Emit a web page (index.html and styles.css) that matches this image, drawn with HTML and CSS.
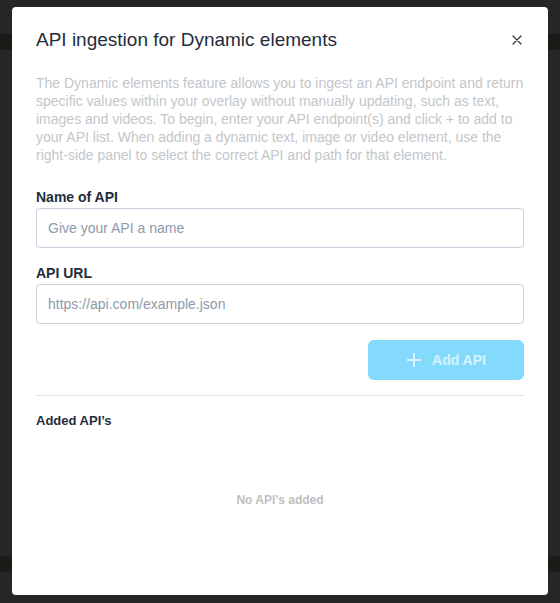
FILE: index.html
```html
<!DOCTYPE html>
<html>
<head>
<meta charset="utf-8">
<link rel="stylesheet" href="styles.css">
</head>
<body>
<div class="backdrop">
  <div class="band band-top"></div>
  <div class="band band-bottom"></div>
  <div class="modal">
    <div class="modal-header">
      <h1 class="title">API ingestion for Dynamic elements</h1>
      <button class="close" aria-label="Close">
        <svg width="10" height="10" viewBox="0 0 10 10"><path d="M1 1L9 9M9 1L1 9" stroke="#2f3b48" stroke-width="1.3" stroke-linecap="round"/></svg>
      </button>
    </div>
    <p class="intro">The Dynamic elements feature allows you to ingest an API endpoint and return specific values within your overlay without manually updating, such as text, images and videos. To begin, enter your API endpoint(s) and click + to add to your API list. When adding a dynamic text, image or video element, use the right-side panel to select the correct API and path for that element.</p>
    <label class="field">
      <span class="label">Name of API</span>
      <input class="input" type="text" placeholder="Give your API a name">
    </label>
    <label class="field">
      <span class="label">API URL</span>
      <input class="input" type="text" placeholder="https://api.com/example.json">
    </label>
    <div class="actions">
      <button class="add-btn">
        <svg width="16" height="16" viewBox="0 0 16 16"><path d="M8 1V15M1 8H15" stroke="#d6f2ff" stroke-width="2"/></svg>
        <span>Add API</span>
      </button>
    </div>
    <hr class="divider">
    <h2 class="subtitle">Added API’s</h2>
    <div class="empty">No API’s added</div>
  </div>
</div>
</body>
</html>
```

FILE: styles.css
```css
html, body {
  margin: 0;
  padding: 0;
}
body {
  background: #262626;
  font-family: "Liberation Sans", Arial, Helvetica, sans-serif;
  width: 560px;
  height: 603px;
  overflow: hidden;
}
.backdrop {
  position: relative;
  width: 560px;
  height: 603px;
  padding-top: 7px;
  box-sizing: border-box;
}
.band {
  position: absolute;
  left: 0;
  right: 0;
  height: 16px;
  background: #1a1a17;
}
.band-top { top: 34px; }
.band-bottom { top: 556px; background: #1b1b18; }
.modal {
  position: relative;
  margin-left: 12px;
  width: 536px;
  height: 588px;
  box-sizing: border-box;
  background: #ffffff;
  border-radius: 4px;
  padding: 21px 24px 0 24px;
  display: flex;
  flex-direction: column;
}
.modal-header {
  display: flex;
  align-items: center;
  justify-content: space-between;
  height: 24px;
}
.title {
  margin: 0;
  font-size: 19px;
  line-height: 24px;
  font-weight: normal;
  color: #1f2d3d;
}
.close {
  border: 0;
  background: none;
  padding: 0;
  width: 10px;
  height: 10px;
  margin-right: 2px;
  display: flex;
}
.intro {
  margin: 22px 0 0 0;
  font-size: 14px;
  line-height: 18px;
  color: #c4c6ca;
}
.field {
  display: flex;
  flex-direction: column;
  margin-top: 25px;
}
.field + .field {
  margin-top: 17px;
}
.label {
  font-size: 14px;
  line-height: 16px;
  font-weight: bold;
  color: #1f2d3d;
  margin-bottom: 3px;
}
.input {
  height: 40px;
  box-sizing: border-box;
  border: 1px solid #c6d2de;
  border-radius: 4px;
  padding: 0 11px;
  font-family: inherit;
  font-size: 14px;
  color: #1f2d3d;
  outline: none;
}
.input::placeholder {
  color: #8d9bab;
}
.actions {
  display: flex;
  justify-content: flex-end;
  margin-top: 16px;
}
.add-btn {
  width: 156px;
  height: 40px;
  border: 0;
  border-radius: 6px;
  background: #84dafd;
  display: flex;
  align-items: center;
  justify-content: center;
  gap: 10px;
  font-family: inherit;
  font-size: 14px;
  font-weight: bold;
  color: #d6f2ff;
  padding: 0;
}
.divider {
  margin: 15px 0 0 0;
  border: 0;
  border-top: 1px solid #e2e2e2;
  height: 0;
}
.subtitle {
  margin: 17px 0 0 0;
  font-size: 13px;
  line-height: 16px;
  font-weight: bold;
  color: #1f2d3d;
}
.empty {
  margin-top: 63px;
  text-align: center;
  font-size: 12px;
  line-height: 16px;
  font-weight: bold;
  color: #c0c0c0;
}
```
